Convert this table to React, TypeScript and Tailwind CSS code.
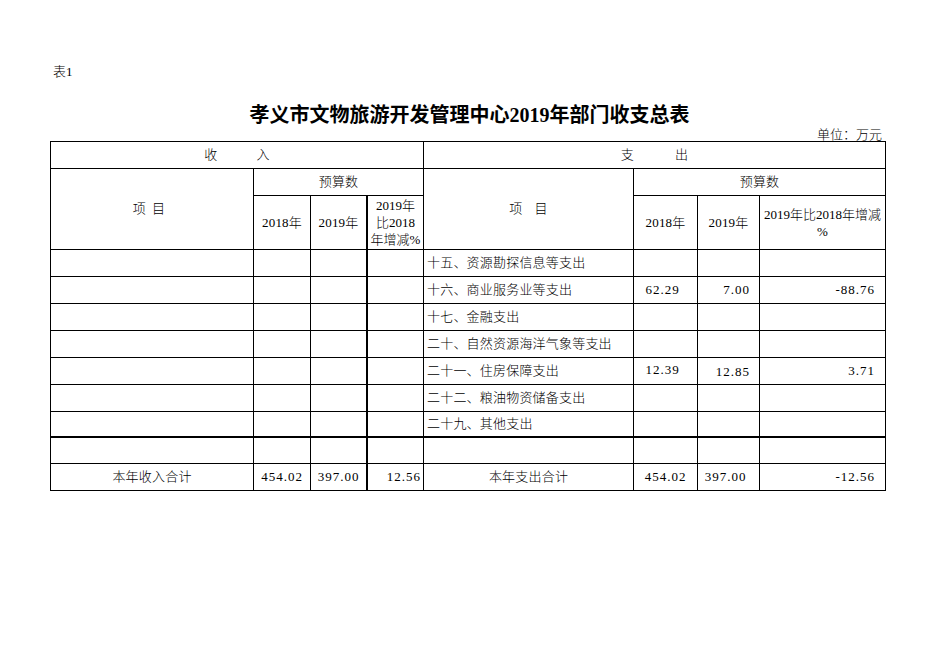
const cell = "border-r border-b border-black flex items-center";

type Row = {
  name: string;
  y18?: string;
  y19?: string;
  pct?: string;
  low19?: boolean;
};

const rows: Row[] = [
  { name: "十五、资源勘探信息等支出" },
  { name: "十六、商业服务业等支出", y18: "62.29", y19: "7.00", pct: "-88.76" },
  { name: "十七、金融支出" },
  { name: "二十、自然资源海洋气象等支出" },
  { name: "二十一、住房保障支出", y18: "12.39", y19: "12.85", pct: "3.71", low19: true },
  { name: "二十二、粮油物资储备支出" },
  { name: "二十九、其他支出" },
  { name: "" },
];

export default function App() {
  return (
    <div className="w-[936px] h-[662px] bg-white text-black font-['Liberation_Serif','Noto_Sans_CJK_SC',serif] font-light text-[13px]">
      <div className="pt-[64px] pl-[53px] h-[80px] leading-[16px]">表1</div>

      <div className="mt-[22px] h-[26px] leading-[26px] text-center pl-[3px] text-[20px] font-bold">
        孝义市文物旅游开发管理中心2019年部门收支总表
      </div>
      <div className="h-[13px] leading-[13px] text-right pr-[54px]">单位：万元</div>

      <div className="ml-[50px] w-[836px] grid grid-cols-[203px_57px_57px_56px_210px_64px_62px_126px] grid-rows-[27px_27px_54px_27px_27px_27px_27px_27px_27px_26px_26px_27px] border-l border-t border-black tracking-[0.2px]">
        {/* header row 1 */}
        <div className={`${cell} col-span-4 justify-center gap-[39px]`}>
          <span>收</span>
          <span>入</span>
        </div>
        <div className={`${cell} col-span-4 justify-center gap-[41px]`}>
          <span>支</span>
          <span>出</span>
        </div>

        {/* header row 2-3 */}
        <div className={`${cell} row-span-2 justify-center gap-[6px] pr-[6px]`}>
          <span>项</span>
          <span>目</span>
        </div>
        <div className={`${cell} col-span-3 justify-center`}>预算数</div>
        <div className={`${cell} row-span-2 justify-center gap-[12px]`}>
          <span>项</span>
          <span>目</span>
        </div>
        <div className={`${cell} col-span-3 justify-center`}>预算数</div>

        <div className={`${cell} justify-center`}>2018年</div>
        <div className={`${cell} justify-center border-r-2`}>2019年</div>
        <div className={`${cell} justify-center text-center leading-[17px] tracking-normal`}>
          2019年
          <br />
          比2018
          <br />
          年增减%
        </div>
        <div className={`${cell} justify-center`}>2018年</div>
        <div className={`${cell} justify-center`}>2019年</div>
        <div className={`${cell} justify-center text-center leading-[17px] tracking-normal`}>
          2019年比2018年增减
          <br />
          %
        </div>

        {/* body */}
        {rows.map((r, i) => {
          const thick = i === 6 ? "border-b-2" : "";
          return (
            <div key={i} className="contents">
              <div className={`${cell} ${thick}`} />
              <div className={`${cell} ${thick}`} />
              <div className={`${cell} ${thick} border-r-2`} />
              <div className={`${cell} ${thick}`} />
              <div className={`${cell} ${thick} pl-[3px] whitespace-nowrap`}>{r.name}</div>
              <div className={`${cell} ${thick} justify-center pr-[6px] tracking-[1px] ${r.low19 ? "pb-[3px]" : ""}`}>
                {r.y18}
              </div>
              <div className={`${cell} ${thick} justify-end pr-[9px] tracking-[1px] ${r.low19 ? "items-end pb-[3px]" : ""}`}>
                {r.y19}
              </div>
              <div className={`${cell} ${thick} justify-end pr-[10px] tracking-[1px]`}>{r.pct}</div>
            </div>
          );
        })}

        {/* totals */}
        <div className={`${cell} justify-center`}>本年收入合计</div>
        <div className={`${cell} justify-center tracking-[1px]`}>454.02</div>
        <div className={`${cell} justify-center border-r-2 tracking-[1px]`}>397.00</div>
        <div className={`${cell} justify-end pr-[2px] tracking-[1px]`}>12.56</div>
        <div className={`${cell} justify-center`}>本年支出合计</div>
        <div className={`${cell} justify-center tracking-[1px]`}>454.02</div>
        <div className={`${cell} justify-center pr-[6px] tracking-[1px]`}>397.00</div>
        <div className={`${cell} justify-end pr-[10px] tracking-[1px]`}>-12.56</div>
      </div>
    </div>
  );
}
